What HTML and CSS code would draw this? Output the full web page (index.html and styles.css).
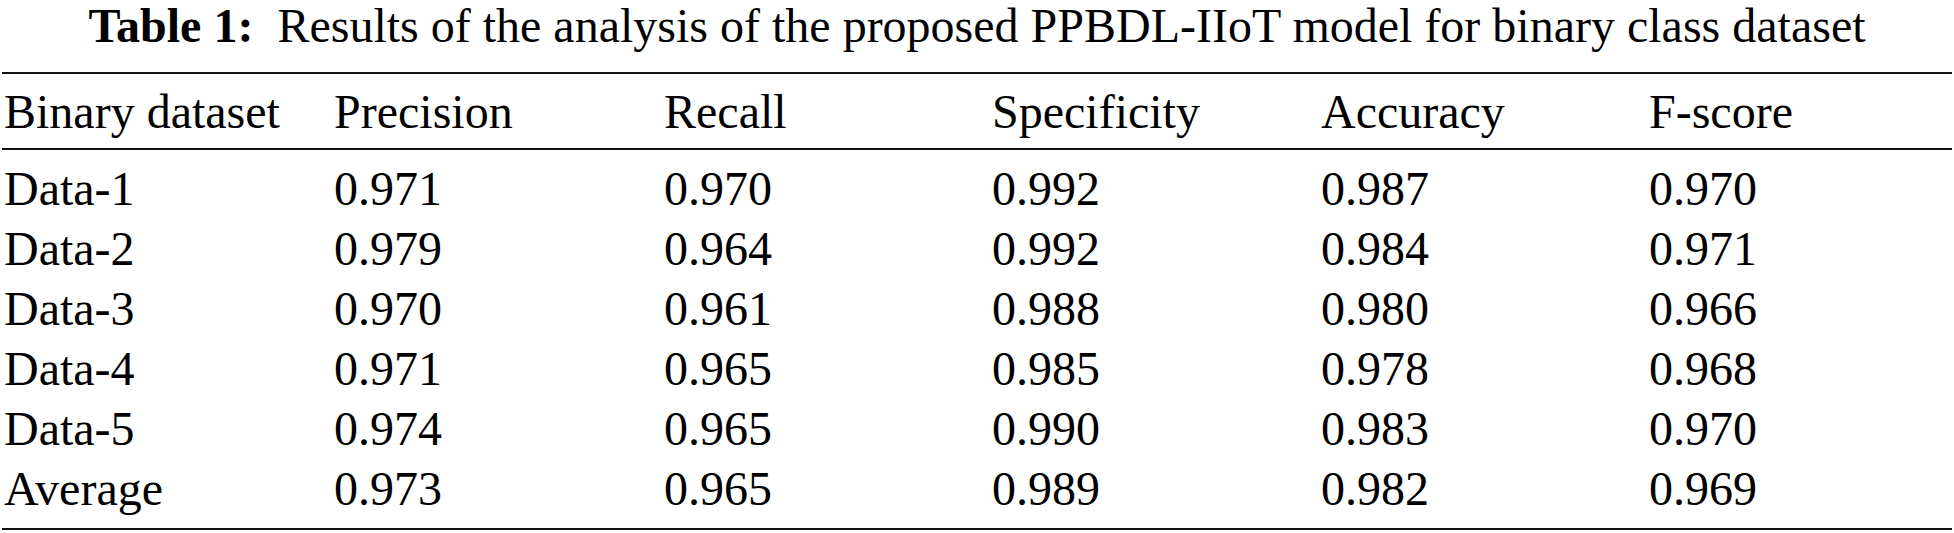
FILE: index.html
```html
<!DOCTYPE html>
<html>
<head>
<meta charset="utf-8">
<link rel="stylesheet" href="styles.css">
</head>
<body>
<div class="wrap">
  <div class="caption"><b>Table 1:</b>&nbsp; Results of the analysis of the proposed PPBDL-IIoT model for binary class dataset</div>
  <table class="tbl">
    <colgroup>
      <col class="c1"><col class="c2"><col class="c3"><col class="c4"><col class="c5"><col class="c6">
    </colgroup>
    <thead>
      <tr><th>Binary dataset</th><th>Precision</th><th>Recall</th><th>Specificity</th><th>Accuracy</th><th>F-score</th></tr>
    </thead>
    <tbody>
      <tr class="first"><td>Data-1</td><td>0.971</td><td>0.970</td><td>0.992</td><td>0.987</td><td>0.970</td></tr>
      <tr><td>Data-2</td><td>0.979</td><td>0.964</td><td>0.992</td><td>0.984</td><td>0.971</td></tr>
      <tr><td>Data-3</td><td>0.970</td><td>0.961</td><td>0.988</td><td>0.980</td><td>0.966</td></tr>
      <tr><td>Data-4</td><td>0.971</td><td>0.965</td><td>0.985</td><td>0.978</td><td>0.968</td></tr>
      <tr><td>Data-5</td><td>0.974</td><td>0.965</td><td>0.990</td><td>0.983</td><td>0.970</td></tr>
      <tr class="last"><td>Average</td><td>0.973</td><td>0.965</td><td>0.989</td><td>0.982</td><td>0.969</td></tr>
    </tbody>
  </table>
</div>
</body>
</html>
```
FILE: styles.css
```css
html, body {
  margin: 0;
  padding: 0;
  background: #fff;
}
.wrap {
  width: 1954px;
  padding: 0 2px;
  box-sizing: border-box;
  font-family: "Liberation Serif", "Times New Roman", serif;
  color: #000;
}
.caption {
  text-align: center;
  font-family: "Liberation Serif", "Times New Roman", serif;
  font-size: 48px;
  line-height: 52px;
  height: 72px;
  white-space: nowrap;
}
.caption b {
  font-weight: bold;
}
.tbl {
  width: 1950px;
  border-collapse: collapse;
  table-layout: fixed;
  font-family: "Liberation Serif", "Times New Roman", serif;
  font-size: 48px;
  border-top: 2px solid #111;
  border-bottom: 2px solid #111;
}
.c1 { width: 330px; }
.c2 { width: 330px; }
.c3 { width: 328px; }
.c4 { width: 329px; }
.c5 { width: 328px; }
.c6 { width: auto; }
.tbl th, .tbl td {
  font-family: "Liberation Serif", "Times New Roman", serif;
  text-align: left;
  font-weight: normal;
  padding: 0 0 0 2px;
  white-space: nowrap;
}
.tbl thead th {
  height: 74px;
  border-bottom: 2px solid #111;
}
.tbl tbody td {
  height: 60px;
  line-height: 60px;
}
.tbl tbody tr.first td {
  padding-top: 9px;
}
.tbl tbody tr.last td {
  padding-bottom: 9px;
}
```
